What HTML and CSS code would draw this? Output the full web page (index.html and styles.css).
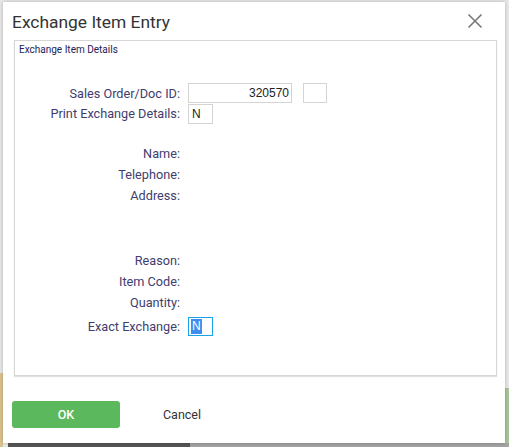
FILE: index.html
```html
<!DOCTYPE html>
<html>
<head>
<meta charset="utf-8">
<link rel="stylesheet" href="styles.css">
</head>
<body>
<div class="backdrop">
  <div class="bg-left"></div>
  <div class="bg-bottom-dark"></div>
  <div class="bg-bottom-light"></div>
  <div class="bg-right"></div>
</div>
<div class="modal">
  <div class="modal-header">
    <h1 class="modal-title">Exchange Item Entry</h1>
    <button class="close-btn" aria-label="Close">
      <svg width="16" height="16" viewBox="0 0 16 16"><path d="M1.5 1.5 L14.5 14.5 M14.5 1.5 L1.5 14.5" stroke="#777" stroke-width="1.6" fill="none"/></svg>
    </button>
  </div>
  <div class="panel">
    <div class="legend">Exchange Item Details</div>
    <div class="form">
      <div class="row"><label class="lbl">Sales Order/Doc ID:</label><div class="field"><input class="inp inp-doc" value="320570"><input class="inp inp-small" value=""></div></div>
      <div class="row"><label class="lbl">Print Exchange Details:</label><div class="field"><input class="inp inp-yn" value="N"></div></div>
      <div class="row"></div>
      <div class="row tall"><label class="lbl">Name:</label></div>
      <div class="row tall"><label class="lbl">Telephone:</label></div>
      <div class="row tall"><label class="lbl">Address:</label></div>
      <div class="row spacer"></div>
      <div class="row tall"><label class="lbl">Reason:</label></div>
      <div class="row tall"><label class="lbl">Item Code:</label></div>
      <div class="row tall"><label class="lbl">Quantity:</label></div>
      <div class="row exact"><label class="lbl">Exact Exchange:</label><div class="field"><span class="inp inp-yn focused"><span class="sel">N</span></span></div></div>
    </div>
  </div>
  <div class="modal-footer">
    <button class="btn btn-ok">OK</button>
    <button class="btn btn-cancel">Cancel</button>
  </div>
</div>
</body>
</html>
```
FILE: styles.css
```css
* { box-sizing: border-box; }
html, body { margin: 0; padding: 0; }
body {
  width: 509px;
  height: 447px;
  overflow: hidden;
  background: #e9e9e9;
  font-family: Roboto, "Liberation Sans", sans-serif;
  position: relative;
}
.backdrop { position: absolute; inset: 0; }
.bg-left { position: absolute; left: 0; top: 373px; width: 3px; height: 74px; background: #dcc48e; }
.bg-bottom-dark { position: absolute; left: 8px; top: 443px; width: 182px; height: 4px; background: #565656; }
.bg-bottom-light { position: absolute; left: 190px; top: 443px; width: 319px; height: 4px; background: #a4a4a4; }
.bg-right { position: absolute; left: 505px; top: 388px; width: 4px; height: 55px; background: #a9c79a; }

.modal {
  position: relative;
  margin: 2px 0 0 3px;
  width: 502px;
  height: 441px;
  background: #fff;
  box-shadow: 0 0 4px rgba(0,0,0,0.25);
  display: flex;
  flex-direction: column;
}
.modal-header {
  height: 38px;
  display: flex;
  align-items: center;
  justify-content: space-between;
  padding: 0 22px 0 9px;
}
.modal-title {
  margin: 0;
  font-size: 17.4px;
  font-weight: 400;
  color: #333;
  padding-top: 2px;
}
.close-btn {
  border: 0;
  background: none;
  padding: 0;
  width: 16px;
  height: 16px;
  display: flex;
}
.panel {
  margin: 0 8px 0 11px;
  height: 336px;
  border: 1px solid #d6d6d6;
  box-shadow: 0 1px 1px rgba(0,0,0,0.12);
  padding: 3px 0 0 0;
}
.legend {
  font-size: 10px;
  color: #22225a;
  padding-left: 4px;
  line-height: 12px;
}
.form {
  padding-top: 27px;
  display: flex;
  flex-direction: column;
}
.row {
  display: flex;
  align-items: center;
  height: 20px;
}
.row.tall { height: 21px; }
.row.spacer { height: 44px; }
.row.exact { height: 26px; }
.lbl {
  width: 166px;
  text-align: right;
  font-size: 12.7px;
  color: #413d6e;
  padding-right: 1px;
}
.field {
  margin-left: 7px;
  display: flex;
  align-items: center;
  gap: 11px;
}
.inp {
  height: 20px;
  border: 1px solid #d4d4d4;
  font-family: "Liberation Sans", Arial, sans-serif;
  font-size: 12px;
  color: #222;
  padding: 0 2px;
  background: #fff;
  outline: none;
}
.inp-doc { width: 104px; text-align: right; }
.inp-small { width: 24px; }
.inp-yn { width: 25px; }
.row:nth-child(2) .inp-yn { height: 20px; margin-top: 1px; padding-left: 3px; }
.focused {
  display: flex;
  align-items: center;
  height: 19px;
  border: 1px solid #19a3e8;
  padding: 0 0 0 2px;
  margin-top: 1px;
}
.sel {
  background: #3d8ef0;
  color: #fff;
  line-height: 15px;
  padding: 0 1px;
}
.modal-footer {
  display: flex;
  align-items: center;
  padding: 25px 0 0 9px;
  gap: 8px;
}
.btn {
  width: 108px;
  height: 27px;
  border: 0;
  border-radius: 3px;
  font-family: Roboto, "Liberation Sans", sans-serif;
  font-size: 12.5px;
}
.btn-ok {
  background: #5cb85c;
  color: #fff;
  font-weight: 500;
}
.btn-cancel {
  background: transparent;
  color: #333;
}
```
